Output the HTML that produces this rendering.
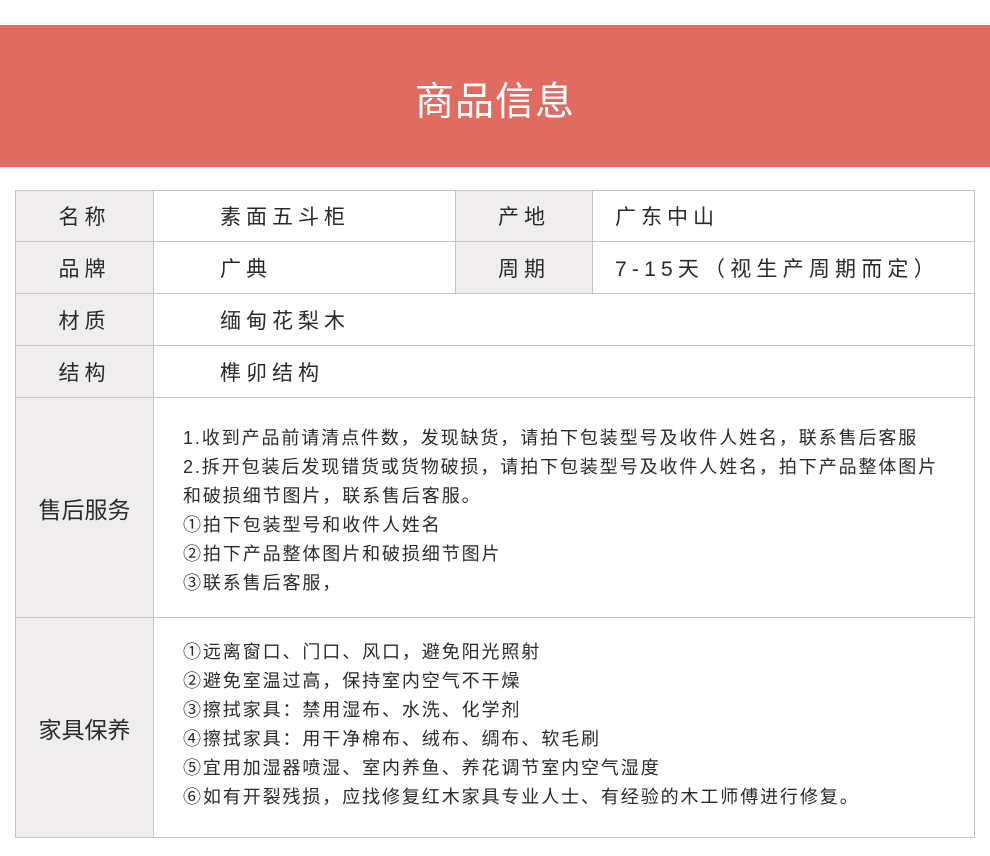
<!DOCTYPE html>
<html><head><meta charset="utf-8"><style>
*{margin:0;padding:0;box-sizing:border-box}
body{width:990px;height:856px;background:#fff;position:relative;font-family:"Liberation Sans","Noto Sans CJK SC",sans-serif;color:#2a2a2a;overflow:hidden}
.banner{position:absolute;left:0;top:25px;width:990px;height:142px;background:#e06b60;color:#fff;font-size:39px;text-align:center;line-height:156px;letter-spacing:1px}
.c{position:absolute;border:1px solid #c4c4c4;display:flex;align-items:center;font-size:21px;letter-spacing:5px}
.g{background:#efedee;justify-content:center}
.v{padding-left:66px}
.t{font-size:18px;letter-spacing:1.9px;line-height:29px;padding-left:29px;display:block;padding-top:0}
</style></head><body>
<div class="banner">商品信息</div>
<div class="c g" style="left:15px;top:190px;width:139px;height:52px">名称</div>
<div class="c v" style="left:153px;top:190px;width:303px;height:52px">素面五斗柜</div>
<div class="c g" style="left:455px;top:190px;width:138px;height:52px">产地</div>
<div class="c" style="left:592px;top:190px;width:383px;height:52px;padding-left:22px">广东中山</div>
<div class="c g" style="left:15px;top:241px;width:139px;height:53px">品牌</div>
<div class="c v" style="left:153px;top:241px;width:303px;height:53px">广典</div>
<div class="c g" style="left:455px;top:241px;width:138px;height:53px">周期</div>
<div class="c" style="left:592px;top:241px;width:383px;height:53px;padding-left:22px;letter-spacing:5.2px">7-15天（视生产周期而定）</div>
<div class="c g" style="left:15px;top:293px;width:139px;height:53px">材质</div>
<div class="c v" style="left:153px;top:293px;width:822px;height:53px">缅甸花梨木</div>
<div class="c g" style="left:15px;top:345px;width:139px;height:53px">结构</div>
<div class="c v" style="left:153px;top:345px;width:822px;height:53px">榫卯结构</div>
<div class="c g" style="left:15px;top:397px;width:139px;height:221px;letter-spacing:0;font-size:23px">售后服务</div>
<div class="c t" style="left:153px;top:397px;width:822px;height:221px;padding-top:26px">1.收到产品前请清点件数，发现缺货，请拍下包装型号及收件人姓名，联系售后客服<br>2.拆开包装后发现错货或货物破损，请拍下包装型号及收件人姓名，拍下产品整体图片<br>和破损细节图片，联系售后客服。<br>①拍下包装型号和收件人姓名<br>②拍下产品整体图片和破损细节图片<br>③联系售后客服，</div>
<div class="c g" style="left:15px;top:617px;width:139px;height:221px;letter-spacing:0;font-size:23px">家具保养</div>
<div class="c t" style="left:153px;top:617px;width:822px;height:221px;padding-top:20px">①远离窗口、门口、风口，避免阳光照射<br>②避免室温过高，保持室内空气不干燥<br>③擦拭家具：禁用湿布、水洗、化学剂<br>④擦拭家具：用干净棉布、绒布、绸布、软毛刷<br>⑤宜用加湿器喷湿、室内养鱼、养花调节室内空气湿度<br>⑥如有开裂残损，应找修复红木家具专业人士、有经验的木工师傅进行修复。</div>
</body></html>
